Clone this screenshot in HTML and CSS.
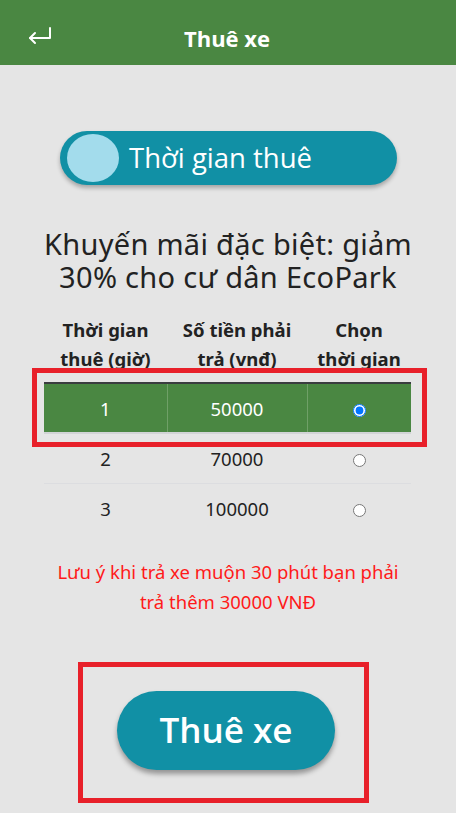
FILE: index.html
```html
<!DOCTYPE html>
<html lang="vi">
<head>
<meta charset="utf-8">
<title>Thuê xe</title>
<link rel="stylesheet" href="styles.css">
</head>
<body>
<header class="topbar">
  <button class="back" aria-label="Quay lại">
    <svg width="24" height="18" viewBox="0 0 24 18" fill="none" stroke="#fff" stroke-width="2" stroke-linecap="round" stroke-linejoin="round">
      <path d="M22 1 V11 H2"/>
      <path d="M7 6 L2 11 L7 16"/>
    </svg>
  </button>
  <h1 class="title">Thuê xe</h1>
</header>

<main class="content">
  <div class="toggle">
    <span class="knob"></span>
    <span class="toggle-label">Thời gian thuê</span>
  </div>

  <h2 class="promo">Khuyến mãi đặc biệt: giảm 30% cho cư dân EcoPark</h2>

  <div class="table-wrap">
    <table class="rates">
      <thead>
        <tr>
          <th class="c1">Thời gian thuê (giờ)</th>
          <th class="c2">Số tiền phải trả (vnđ)</th>
          <th class="c3">Chọn thời gian</th>
        </tr>
      </thead>
      <tbody>
        <tr class="selected">
          <td>1</td>
          <td>50000</td>
          <td><input type="radio" name="time" checked></td>
        </tr>
        <tr>
          <td>2</td>
          <td>70000</td>
          <td><input type="radio" name="time"></td>
        </tr>
        <tr>
          <td>3</td>
          <td>100000</td>
          <td><input type="radio" name="time"></td>
        </tr>
      </tbody>
    </table>
    <div class="highlight-row"></div>
  </div>

  <p class="note">Lưu ý khi trả xe muộn 30 phút bạn phải trả thêm 30000 VNĐ</p>

  <div class="cta-frame">
    <button class="cta">Thuê xe</button>
  </div>
</main>
</body>
</html>
```

FILE: styles.css
```css
* { box-sizing: border-box; }

html, body {
  margin: 0;
  padding: 0;
  background: #e5e5e5;
  font-family: "Noto Sans", "Open Sans", sans-serif;
  color: #222;
}

.topbar {
  height: 65px;
  background: #4a8742;
  display: flex;
  align-items: center;
  justify-content: center;
  position: relative;
}

.back {
  position: absolute;
  left: 28px;
  top: 27px;
  background: none;
  border: 0;
  padding: 0;
  width: 24px;
  height: 18px;
  display: flex;
}

.title {
  margin: 0;
  color: #fff;
  font-family: "Open Sans", sans-serif;
  font-weight: 700;
  font-size: 22px;
  padding-top: 10px;
  transform: translateX(-1px);
}

.content {
  display: flex;
  flex-direction: column;
  align-items: center;
  padding-top: 66px;
}

.toggle {
  width: 337px;
  height: 54px;
  margin-left: 1px;
  background: #1190a5;
  border-radius: 27px;
  display: flex;
  align-items: center;
  padding-left: 7px;
  gap: 10px;
  box-shadow: 0 3px 4px rgba(0,0,0,0.28);
}

.knob {
  width: 52px;
  height: 48px;
  border-radius: 50%;
  background: #a3dcec;
  flex: none;
}

.toggle-label {
  color: #fff;
  font-family: "Open Sans", sans-serif;
  font-weight: 500;
  font-size: 27.5px;
  padding-bottom: 2px;
}

.promo {
  margin: 42px 0 0;
  width: 380px;
  text-align: center;
  font-weight: 400;
  font-size: 29px;
  line-height: 33px;
  letter-spacing: 0.3px;
  color: #222;
}

.table-wrap {
  position: relative;
  margin-top: 23px;
}

.rates {
  width: 367px;
  border-collapse: collapse;
  margin-left: -1px;
  font-size: 18.5px;
}

.rates th {
  font-weight: 700;
  font-size: 18.5px;
  line-height: 28.5px;
  padding: 0 8px 9px;
  text-align: center;
  vertical-align: bottom;
}

.rates .c1 { width: 123px; }
.rates .c2 { width: 140px; }
.rates .c3 { width: 104px; }

.rates td {
  height: 50px;
  text-align: center;
  vertical-align: middle;
  padding: 0;
  border-top: 1px solid #dcdde0;
}

.rates tbody tr:first-child td {
  border-top: 2px solid #3a3d3f;
  border-bottom: 2px solid #d2d4d6;
}

.rates tr.selected td {
  background: #4a8742;
  color: #fff;
}

.rates tr.selected td + td {
  border-left: 1px solid #6fa067;
}

.rates input[type="radio"] {
  margin: 0;
  width: 13px;
  height: 13px;
  vertical-align: middle;
}

.highlight-row {
  position: absolute;
  left: -13px;
  right: -16px;
  top: 52px;
  height: 79px;
  border: 5px solid #e8202a;
  pointer-events: none;
}

.note {
  margin: 24px 0 0;
  width: 360px;
  text-align: center;
  color: #ff1a1a;
  font-size: 18.5px;
  line-height: 30px;
}

.cta-frame {
  margin-top: 45px;
  margin-right: 9px;
  width: 291px;
  height: 141px;
  border: 5px solid #e8202a;
  display: flex;
  align-items: center;
  justify-content: center;
  padding-left: 5px;
  padding-bottom: 4px;
}

.cta {
  width: 218px;
  height: 79px;
  border: 0;
  border-radius: 40px;
  background: #1190a5;
  color: #fff;
  font-family: "Open Sans", sans-serif;
  font-weight: 600;
  font-size: 35px;
  box-shadow: 0 4px 5px rgba(0,0,0,0.35);
  padding: 0 0 3px;
}
```
